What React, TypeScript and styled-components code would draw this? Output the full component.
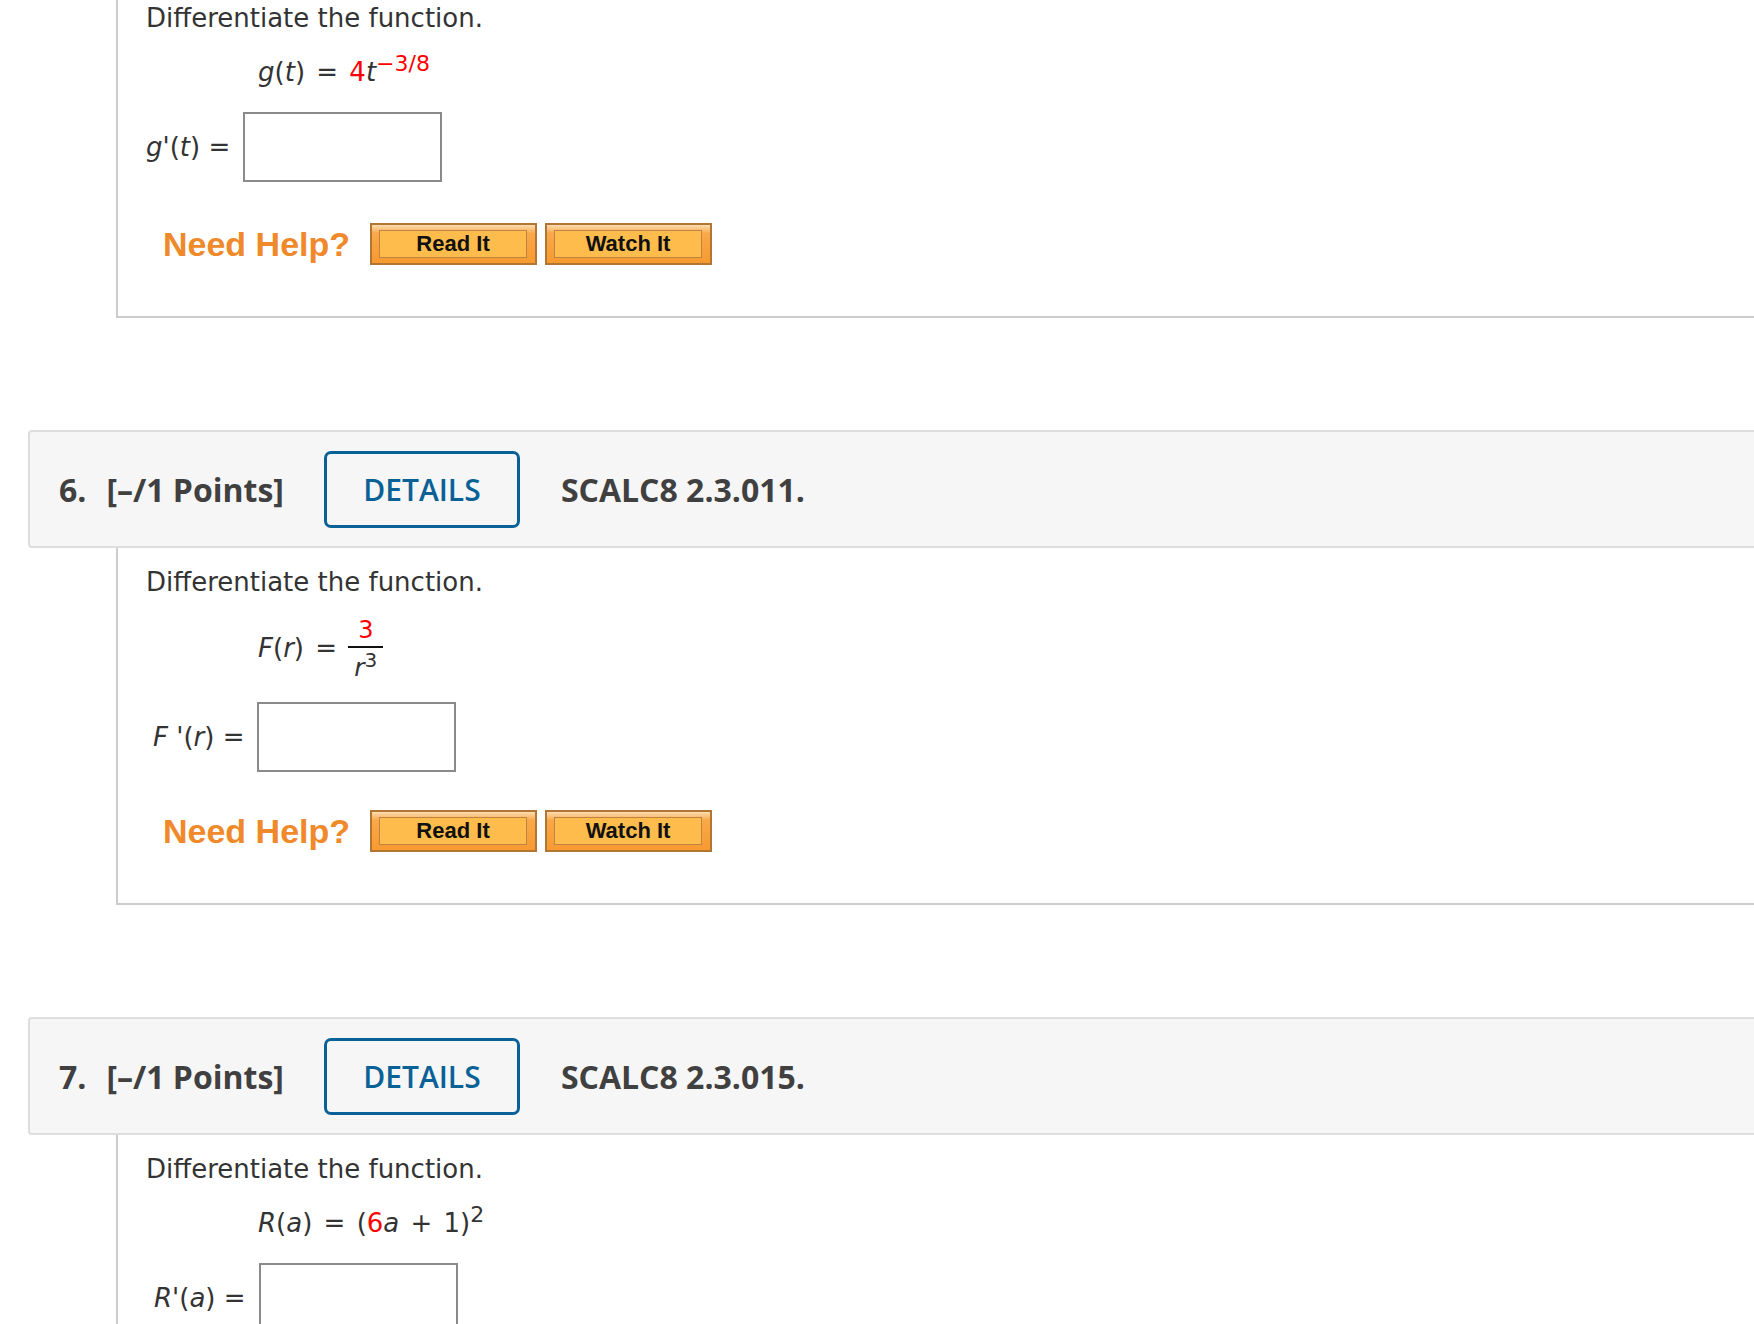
import styled, { createGlobalStyle } from "styled-components";

const GlobalStyle = createGlobalStyle`
  html, body {
    margin: 0;
    padding: 0;
    background: #fff;
    overflow: hidden;
  }
  body {
    font-family: "DejaVu Sans", Verdana, sans-serif;
    color: #333;
  }
`;

// the view is scrolled: question 5 is cut at the top
const Page = styled.div`
  margin-top: -16px;
  width: calc(100% + 40px);
  display: flex;
  flex-direction: column;
`;

const QuestionHeader = styled.div`
  margin: 112px 0 0 28px;
  height: 118px;
  box-sizing: border-box;
  display: flex;
  align-items: center;
  padding-left: 29px;
  background: #f6f6f6;
  border: 2px solid #dddddd;
  border-radius: 4px 0 0 4px;
  font-family: "Open Sans", "Liberation Sans", sans-serif;
  font-weight: 700;
  font-size: 32px;
  color: #404040;
`;

const QuestionNumber = styled.span`
  margin-right: 20px;
`;

const Points = styled.span`
  margin-right: 40px;
`;

const DetailsButton = styled.button`
  width: 196px;
  height: 77px;
  box-sizing: border-box;
  margin-right: 41px;
  background: transparent;
  border: 3px solid #0a6198;
  border-radius: 7px;
  color: #0a6196;
  font-family: "Open Sans", "Liberation Sans", sans-serif;
  font-weight: 600;
  font-size: 30px;
  cursor: pointer;
`;

const Panel = styled.div`
  margin-left: 116px;
  display: flex;
  flex-direction: column;
  padding: 18px 0 51px 28px;
  border-left: 2px solid #cccccc;
  border-bottom: 2px solid #cccccc;
`;

const Prompt = styled.div`
  font-size: 26px;
  line-height: 32px;
  margin-bottom: 22px;
`;

const MathLine = styled.div`
  padding-left: 112px;
  margin-bottom: 24px;
  font-size: 26px;
  line-height: 32px;
  word-spacing: 3px;
  white-space: pre;
`;

const Var = styled.i`
  font-style: italic;
`;

const Red = styled.span`
  color: #ff0000;
`;

const Sup = styled.sup<{ $red?: boolean }>`
  font-size: 22px;
  line-height: 0;
  vertical-align: 10px;
  word-spacing: 0;
  color: ${(p) => (p.$red ? "#ff0000" : "inherit")};
`;

const Fraction = styled.span`
  display: inline-flex;
  flex-direction: column;
  align-items: center;
  vertical-align: middle;
  margin: -5px 0 -5px 0;
`;

const Numerator = styled.span`
  font-size: 24px;
  line-height: 31px;
  padding: 0 8px;
  color: #ff0000;
`;

const FractionBar = styled.span`
  align-self: stretch;
  height: 2px;
  background: #111;
`;

const Denominator = styled.span`
  font-size: 25px;
  line-height: 30px;
  padding: 5px 6px 0;

  sup {
    font-size: 20px;
    line-height: 0;
    vertical-align: 9px;
  }
`;

const AnswerRow = styled.div<{ $indent?: number; $spaceBelow?: number }>`
  display: flex;
  align-items: center;
  gap: 13px;
  height: 70px;
  margin-bottom: ${(p) => p.$spaceBelow ?? 41}px;
  padding-left: ${(p) => p.$indent ?? 0}px;
  font-size: 26px;
  white-space: pre;
`;

const AnswerBox = styled.input`
  width: 199px;
  height: 70px;
  box-sizing: border-box;
  margin: 0;
  border: 2px solid #8a8a8a;
  background: #fff;
`;

const HelpRow = styled.div`
  display: flex;
  align-items: center;
  height: 42px;
  padding-left: 17px;
`;

const NeedHelp = styled.span`
  margin-right: 20px;
  font-family: "Liberation Sans", Arial, sans-serif;
  font-weight: 700;
  font-size: 34px;
  color: #f0892a;
`;

const HelpButtons = styled.div`
  display: flex;
  gap: 8px;
`;

const HelpButton = styled.button`
  width: 167px;
  height: 42px;
  box-sizing: border-box;
  display: flex;
  padding: 5px 8px 5px 7px;
  border: 2px solid #b27634;
  background: linear-gradient(to bottom, #fcdcb0 0%, #f9a849 22%, #f79a30 100%);
  cursor: pointer;
`;

const HelpButtonFace = styled.span`
  flex: 1;
  display: flex;
  align-items: center;
  justify-content: center;
  border: 1px solid #bf8443;
  background: #fdbc4b;
  font-family: "Liberation Sans", Arial, sans-serif;
  font-weight: 700;
  font-size: 22px;
  color: #111;
`;

function Header({ num, code }: { num: number; code: string }) {
  return (
    <QuestionHeader>
      <QuestionNumber>{num}.</QuestionNumber>
      <Points>[–/1 Points]</Points>
      <DetailsButton>DETAILS</DetailsButton>
      <span>{code}</span>
    </QuestionHeader>
  );
}

function NeedHelpRow() {
  return (
    <HelpRow>
      <NeedHelp>Need Help?</NeedHelp>
      <HelpButtons>
        <HelpButton>
          <HelpButtonFace>Read It</HelpButtonFace>
        </HelpButton>
        <HelpButton>
          <HelpButtonFace>Watch It</HelpButtonFace>
        </HelpButton>
      </HelpButtons>
    </HelpRow>
  );
}

export default function App() {
  return (
    <>
      <GlobalStyle />
      <Page>
        <Panel>
          <Prompt>Differentiate the function.</Prompt>
          <MathLine>
            <Var>g</Var>(<Var>t</Var>) = <Red>4</Red>
            <Var>t</Var>
            <Sup $red>−3/8</Sup>
          </MathLine>
          <AnswerRow>
            <span>
              <Var>g'</Var>(<Var>t</Var>) =
            </span>
            <AnswerBox type="text" />
          </AnswerRow>
          <NeedHelpRow />
        </Panel>

        <Header num={6} code="SCALC8 2.3.011." />
        <Panel>
          <Prompt>Differentiate the function.</Prompt>
          <MathLine>
            <Var>F</Var>(<Var>r</Var>) ={" "}
            <Fraction>
              <Numerator>3</Numerator>
              <FractionBar />
              <Denominator>
                <Var>r</Var>
                <sup>3</sup>
              </Denominator>
            </Fraction>
          </MathLine>
          <AnswerRow $indent={7} $spaceBelow={38}>
            <span>
              <Var>F '</Var>(<Var>r</Var>) =
            </span>
            <AnswerBox type="text" />
          </AnswerRow>
          <NeedHelpRow />
        </Panel>

        <Header num={7} code="SCALC8 2.3.015." />
        <Panel>
          <Prompt>Differentiate the function.</Prompt>
          <MathLine>
            <Var>R</Var>(<Var>a</Var>) = (<Red>6</Red>
            <Var>a</Var> + 1)
            <Sup>2</Sup>
          </MathLine>
          <AnswerRow $indent={8}>
            <span>
              <Var>R'</Var>(<Var>a</Var>) =
            </span>
            <AnswerBox type="text" />
          </AnswerRow>
        </Panel>
      </Page>
    </>
  );
}
